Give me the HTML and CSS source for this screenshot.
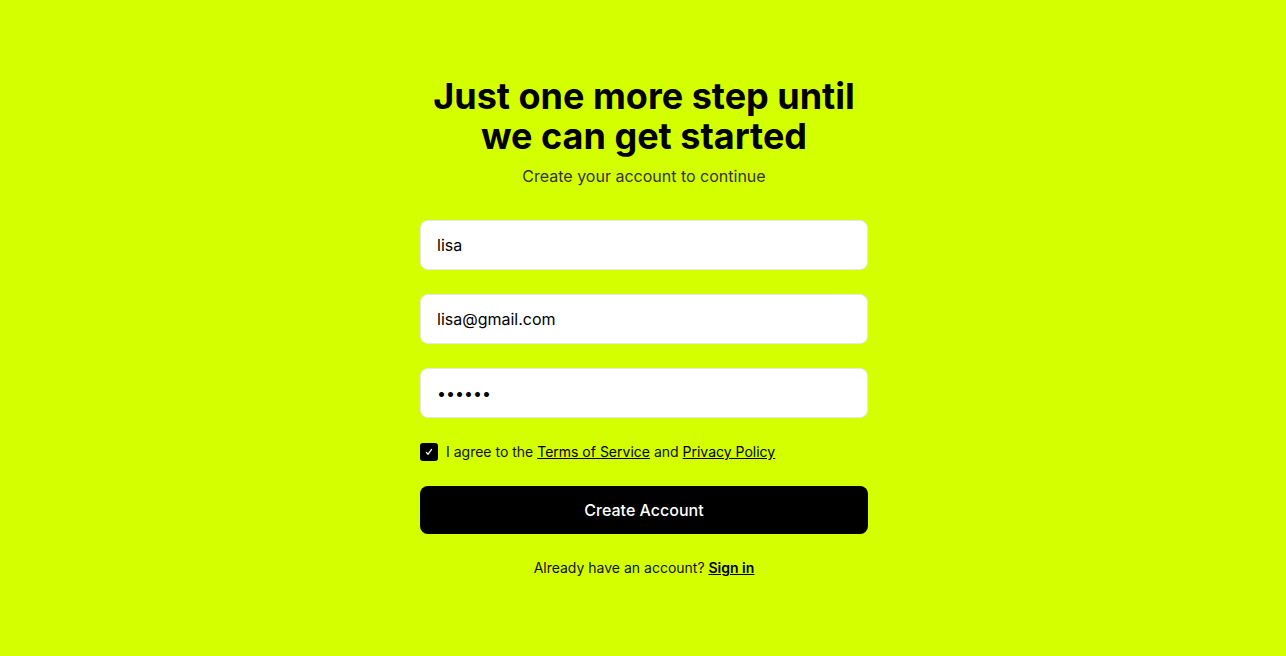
FILE: index.html
```html
<!DOCTYPE html>
<html lang="en">
<head>
<meta charset="utf-8">
<title>Create account</title>
<link rel="stylesheet" href="styles.css">
</head>
<body>
<main class="page">
  <form class="card" onsubmit="return false">
    <h1 class="title">Just one more step until we can get started</h1>
    <p class="subtitle">Create your account to continue</p>
    <div class="fields">
      <input class="field" type="text" value="lisa">
      <input class="field" type="email" value="lisa@gmail.com">
      <input class="field" type="password" value="secret">
    </div>
    <label class="agree">
      <span class="check"><svg width="10" height="10" viewBox="0 0 10 10"><path d="M2.4 5.4 L4 7.3 L7.6 2.4" fill="none" stroke="#fff" stroke-width="1.3" stroke-linecap="round" stroke-linejoin="round"/></svg></span>
      <span>I agree to the <a href="#">Terms of Service</a> and <a href="#">Privacy Policy</a></span>
    </label>
    <button class="submit" type="submit">Create Account</button>
    <p class="signin">Already have an account? <a href="#" class="signin-link">Sign in</a></p>
  </form>
</main>
</body>
</html>
```
FILE: styles.css
```css
* { box-sizing: border-box; }
html, body { margin: 0; height: 100%; }
body {
  background: #d4ff00;
  font-family: Inter, "Noto Sans", sans-serif;
  color: #000;
}
.page {
  min-height: 100vh;
  display: flex;
  align-items: center;
  justify-content: center;
  padding: 0 0 2px 2px;
}
.card {
  width: 448px;
  display: flex;
  flex-direction: column;
}
.title {
  margin: 0;
  font-size: 36px;
  line-height: 40px;
  font-weight: 700;
  text-align: center;
}
.subtitle {
  margin: 8px 0 0;
  font-size: 16px;
  line-height: 24px;
  text-align: center;
  color: #333;
}
.fields {
  margin-top: 32px;
  display: flex;
  flex-direction: column;
  gap: 24px;
}
.field {
  height: 50px;
  width: 100%;
  border: 1px solid #e5e7eb;
  border-radius: 8px;
  background: #fff;
  padding: 0 16px;
  font-family: inherit;
  font-size: 16px;
  color: #000;
  outline: none;
}
.agree {
  margin-top: 24px;
  display: flex;
  align-items: center;
  gap: 8px;
  font-size: 14px;
  line-height: 20px;
  color: #111;
}
.check {
  width: 18px;
  height: 18px;
  border-radius: 3px;
  background: #000;
  display: flex;
  align-items: center;
  justify-content: center;
  flex: none;
}
.agree a { color: #000; text-decoration: underline; }
.submit {
  margin-top: 24px;
  height: 48px;
  border: none;
  border-radius: 8px;
  background: #000;
  color: #fff;
  font-family: inherit;
  font-size: 16px;
  font-weight: 500;
  cursor: pointer;
}
.signin {
  margin: 24px 0 0;
  text-align: center;
  font-size: 14px;
  line-height: 20px;
  color: #111;
}
.signin-link { color: #000; font-weight: 600; text-decoration: underline; }
```
